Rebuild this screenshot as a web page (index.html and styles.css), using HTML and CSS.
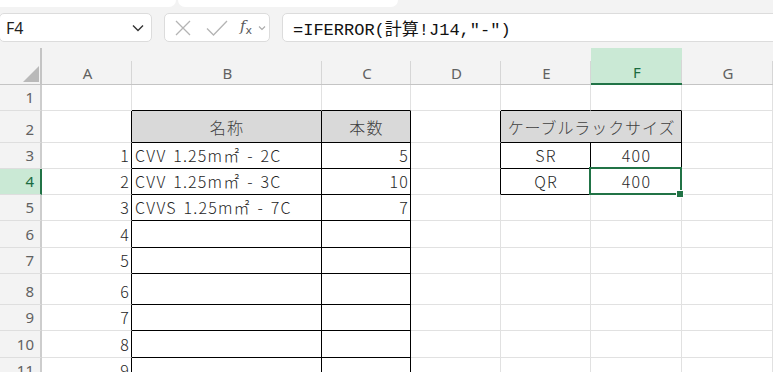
FILE: index.html
```html
<!DOCTYPE html>
<html lang="ja">
<head>
    <meta charset="UTF-8">
    <title>Book1 - Excel</title>
    <link rel="stylesheet" href="styles.css">
</head>
<body>
    <div class="ribbon-edge">
        <div class="edge-left"></div>
        <div class="edge-mid"></div>
    </div>

    <div class="formula-row">
        <div class="name-box">
            <span class="name-text">F4</span>
            <svg class="chevron" width="12" height="8" viewBox="0 0 12 8"><path d="M1 1.5 L6 6.5 L11 1.5" fill="none" stroke="#333" stroke-width="1.4"/></svg>
        </div>
        <div class="fx-tools">
            <svg class="tool-x" width="16" height="16" viewBox="0 0 16 16"><path d="M1 1 L15 15 M15 1 L1 15" stroke="#b4b4b4" stroke-width="1.3" fill="none"/></svg>
            <svg class="tool-check" width="22" height="16" viewBox="0 0 22 16"><path d="M1 8.5 L7.5 15 L21 1" stroke="#b4b4b4" stroke-width="1.3" fill="none"/></svg>
            <span class="tool-fx">f<sub>x</sub></span>
            <svg class="tool-more" width="8" height="6" viewBox="0 0 8 6"><path d="M1 1.5 L4 4.5 L7 1.5" fill="none" stroke="#aaa" stroke-width="1.1"/></svg>
        </div>
        <div class="formula-input">=IFERROR(計算!J14,"-")</div>
    </div>

    <div class="sheet">
        <!-- column headers -->
        <div class="corner"><svg width="16" height="16" viewBox="0 0 16 16"><path d="M16 0 L16 16 L0 16 Z" fill="#b9b9b9"/></svg></div>
        <div class="ch">A</div>
        <div class="ch">B</div>
        <div class="ch">C</div>
        <div class="ch">D</div>
        <div class="ch">E</div>
        <div class="ch on">F</div>
        <div class="ch">G</div>

        <!-- row 1 -->
        <div class="rh">1</div>
        <div></div>
        <div class="bb"></div>
        <div class="bb"></div>
        <div></div>
        <div class="bb"></div>
        <div class="bb"></div>
        <div></div>

        <!-- row 2 -->
        <div class="rh">2</div>
        <div class="rb"></div>
        <div class="rb bb head center">名称</div>
        <div class="rb bb head center">本数</div>
        <div class="rb"></div>
        <div class="rb bb head center merged">ケーブルラックサイズ</div>
        <div></div>

        <!-- row 3 -->
        <div class="rh">3</div>
        <div class="rb num">1</div>
        <div class="rb bb">CVV 1.25m㎡ - 2C</div>
        <div class="rb bb num">5</div>
        <div class="rb"></div>
        <div class="rb bb center">SR</div>
        <div class="rb bb center">400</div>
        <div></div>

        <!-- row 4 -->
        <div class="rh on">4</div>
        <div class="rb num">2</div>
        <div class="rb bb">CVV 1.25m㎡ - 3C</div>
        <div class="rb bb num">10</div>
        <div class="rb"></div>
        <div class="rb bb center">QR</div>
        <div class="rb bb center active">400</div>
        <div></div>

        <!-- row 5 -->
        <div class="rh">5</div>
        <div class="rb num">3</div>
        <div class="rb bb">CVVS 1.25m㎡ - 7C</div>
        <div class="rb bb num">7</div>
        <div></div>
        <div></div>
        <div></div>
        <div></div>

        <!-- rows 6 - 11 -->
        <div class="rh">6</div>
        <div class="rb num">4</div>
        <div class="rb bb"></div>
        <div class="rb bb"></div>
        <div></div><div></div><div></div><div></div>

        <div class="rh">7</div>
        <div class="rb num">5</div>
        <div class="rb bb"></div>
        <div class="rb bb"></div>
        <div></div><div></div><div></div><div></div>

        <div class="rh">8</div>
        <div class="rb num">6</div>
        <div class="rb bb"></div>
        <div class="rb bb"></div>
        <div></div><div></div><div></div><div></div>

        <div class="rh">9</div>
        <div class="rb num">7</div>
        <div class="rb bb"></div>
        <div class="rb bb"></div>
        <div></div><div></div><div></div><div></div>

        <div class="rh">10</div>
        <div class="rb num">8</div>
        <div class="rb bb"></div>
        <div class="rb bb"></div>
        <div></div><div></div><div></div><div></div>

        <div class="rh">11</div>
        <div class="rb num">9</div>
        <div class="rb bb"></div>
        <div class="rb bb"></div>
        <div></div><div></div><div></div><div></div>
    </div>
</body>
</html>
```

FILE: styles.css
```css
* {
    box-sizing: border-box;
}

body {
    margin: 0;
    height: 372px;
    overflow: hidden;
    background-color: #f3f3f3;
    font-family: "Noto Sans CJK JP", sans-serif;
}

/* bottom edge of the ribbon */

.ribbon-edge {
    display: flex;
    height: 7px;
}

.edge-left {
    width: 176px;
    background-color: #fff;
    border-radius: 0 0 7px 0;
}

.edge-mid {
    width: 220px;
    margin-left: 2px;
    background-color: #fff;
    border-radius: 0 0 7px 7px;
}

/* name box + formula bar */

.formula-row {
    display: flex;
    gap: 12px;
    height: 29px;
    margin-top: 6px;
}

.name-box,
.fx-tools,
.formula-input {
    background-color: #fff;
    border: 1px solid #dcdcdc;
    border-radius: 5px;
    display: flex;
    align-items: center;
}

.name-box {
    width: 153px;
    margin-left: -1px;
    padding: 0 7px 0 6px;
    justify-content: space-between;
}

.name-text {
    font-family: "Noto Sans", sans-serif;
    font-size: 16px;
    color: #222;
}

.fx-tools {
    width: 106px;
    padding-left: 10px;
}

.tool-check {
    margin-left: 15px;
}

.tool-fx {
    margin-left: 12px;
    font-family: "DejaVu Serif", serif;
    font-style: italic;
    font-size: 15px;
    color: #5a5a5a;
    line-height: 1;
}

.tool-fx sub {
    font-size: 11px;
    vertical-align: -3px;
    font-style: normal;
    font-family: "DejaVu Sans", sans-serif;
}

.tool-more {
    margin-left: 6px;
}

.formula-input {
    flex: 1;
    margin-right: -10px;
    padding-left: 10px;
    font-family: "Liberation Mono", "Noto Sans CJK JP", monospace;
    font-size: 17px;
    color: #111;
}

/* worksheet grid */

.sheet {
    display: grid;
    grid-template-columns: 42px 90px 190px 89px 90px 90px 91px 1fr;
    grid-template-rows: 37px 26px 32px 26px 26px 26px 27px 26px 31px 26px 27px 26px;
    margin-top: 6px;
    background-color: #fff;
    font-size: 16px;
    font-weight: 300;
    letter-spacing: 1.2px;
    word-spacing: 2px;
    color: #262626;
}

.sheet > div {
    display: flex;
    align-items: flex-end;
    padding: 0 2px 3px 3px;
    line-height: 20px;
    white-space: nowrap;
    border-right: 1px solid #e1e1e1;
    border-bottom: 1px solid #e1e1e1;
}

.sheet > div.corner {
    justify-content: flex-end;
    padding: 0 1px 2px 0;
    background-color: #f3f3f3;
    border-right: 2px solid #c4c4c4;
    border-bottom: 1px solid #c4c4c4;
}

.sheet > div.ch {
    justify-content: center;
    padding-bottom: 1px;
    font-family: "Noto Sans", sans-serif;
    font-weight: 400;
    font-size: 15px;
    letter-spacing: 0;
    color: #616161;
    background-color: #f3f3f3;
    background-image: linear-gradient(#d6d6d6, #d6d6d6);
    background-size: 1px 23px;
    background-position: right bottom;
    background-repeat: no-repeat;
    border-right: none;
    border-bottom: 1px solid #c4c4c4;
}

.sheet > div.ch.on {
    background-color: #cae9d5;
    color: #1b6b3f;
    border-bottom: 2px solid #217346;
}

.sheet > div.rh {
    justify-content: flex-end;
    padding-right: 6px;
    font-family: "Noto Sans", sans-serif;
    font-weight: 400;
    font-size: 15px;
    letter-spacing: 0;
    color: #616161;
    background-color: #f3f3f3;
    border-right: 2px solid #cdcdcd;
    border-bottom-color: #dedede;
}

.sheet > div.rh.on {
    background-color: #cae9d5;
    color: #1b6b3f;
    border-right-color: #217346;
}

.sheet > div.rb {
    border-right-color: #000;
}

.sheet > div.bb {
    border-bottom-color: #000;
}

.sheet > div.num {
    justify-content: flex-end;
    padding-right: 1px;
}

.sheet > div.center {
    justify-content: center;
}

.sheet > div.head {
    background-color: #d9d9d9;
    align-items: center;
    padding-bottom: 0;
    color: #404040;
}

.sheet > div.merged {
    grid-column: span 2;
    letter-spacing: 0.9px;
}

.sheet > div.active {
    position: relative;
}

.active::after {
    content: "";
    position: absolute;
    top: -2px;
    left: -2px;
    right: -1px;
    bottom: -1px;
    border: 2px solid #217346;
    z-index: 1;
}

.active::before {
    content: "";
    position: absolute;
    right: -3px;
    bottom: -4px;
    width: 6px;
    height: 6px;
    background-color: #217346;
    border: 1px solid #fff;
    z-index: 2;
}
```
